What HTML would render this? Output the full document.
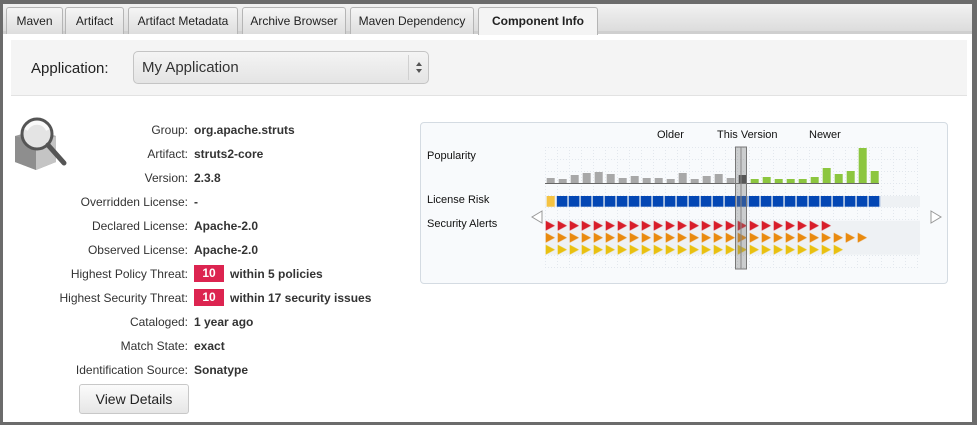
<!DOCTYPE html>
<html><head><meta charset="utf-8"><style>
*{margin:0;padding:0;box-sizing:border-box}
body{width:977px;height:425px;background:#6b6b6b;font-family:"Liberation Sans",sans-serif;position:relative;overflow:hidden}
.frame{position:absolute;left:3px;top:4px;width:969px;height:418px;background:#fff}
.tabbar{position:absolute;left:0;top:0;width:969px;height:30px;background:linear-gradient(#f2f2f2,#dcdcdc);border-bottom:3px solid #cfcfcf}
.tab{position:absolute;top:3px;height:27px;border:1px solid #b5b5b5;border-bottom:none;border-radius:3px 3px 0 0;background:linear-gradient(#f5f5f5,#dedede);font-size:12px;color:#222;text-align:center;line-height:26px}
.tab.on{background:#f4f4f4;font-weight:bold;height:28px}
.panel{position:absolute;left:8px;top:36px;width:956px;height:56px;background:#f4f4f4;border-bottom:1px solid #e2e2e2}
.sel{position:absolute;left:122px;top:11px;width:296px;height:33px;border:1px solid #c4c4c4;border-radius:5px;background:linear-gradient(#f4f4f4,#e4e4e4);font-size:15px;color:#333;padding:7px 8px}
.lbl{position:absolute;font-size:12px;color:#333}
.row{position:absolute;left:0;width:400px;height:20px;font-size:12px}
.row .k{position:absolute;right:215px;color:#333;text-align:right;white-space:nowrap}
.row .v{position:absolute;left:191px;font-weight:bold;color:#333;white-space:nowrap}
.badge{display:inline-block;background:#dc2450;color:#fff;width:30px;height:17px;text-align:center;line-height:17px;margin-right:6px;vertical-align:middle;margin-top:-3px}
.btn{position:absolute;left:76px;top:380px;width:110px;height:30px;border:1px solid #c8c8c8;border-radius:3px;background:linear-gradient(#fbfbfb,#e6e6e6);font-size:14px;color:#222;text-align:center;line-height:28px}
.chart{position:absolute;left:417px;top:118px;width:528px;height:162px;border:1px solid #d4dbe2;border-radius:4px;background:#f8fafc}
</style></head><body>
<div class="frame">
<div class="tabbar">
<div class="tab" style="left:3px;width:57px">Maven</div>
<div class="tab" style="left:62px;width:59px">Artifact</div>
<div class="tab" style="left:125px;width:110px">Artifact Metadata</div>
<div class="tab" style="left:239px;width:104px">Archive Browser</div>
<div class="tab" style="left:347px;width:124px">Maven Dependency</div>
<div class="tab on" style="left:475px;width:120px">Component Info</div>
</div>
<div class="panel">
<div class="lbl" style="left:20px;top:20px;font-size:15px;color:#222">Application:</div>
<div class="sel">My Application
<div style="position:absolute;right:0;top:3px;width:20px;height:25px;border-left:1px solid #d0d0d0"></div>
<svg style="position:absolute;right:5px;top:9px" width="8" height="14"><path d="M1 5L4 1L7 5Z M1 8L4 12L7 8Z" fill="#555"/></svg>
</div>
</div>

<svg style="position:absolute;left:9px;top:112px" width="60" height="60">
<path d="M3 20L24 14L44 20L44 46L24 54L3 46Z" fill="#9a9a9a"/>
<path d="M24 26L44 20L44 46L24 54Z" fill="#c4c4c4"/>
<path d="M3 20L24 26L24 54L3 46Z" fill="#8e8e8e"/>
<circle cx="25" cy="18" r="15" fill="#e4e4e4" stroke="#555" stroke-width="3"/>
<path d="M14 14A12 12 0 0 1 36 14" stroke="#fff" stroke-width="4" fill="none" opacity=".8"/>
<path d="M36 29L52 47" stroke="#555" stroke-width="5" stroke-linecap="round"/>
</svg>

<div style="position:absolute;left:0;top:119px">
<div class="row" style="top:0"><span class="k">Group:</span><span class="v">org.apache.struts</span></div>
<div class="row" style="top:24px"><span class="k">Artifact:</span><span class="v">struts2-core</span></div>
<div class="row" style="top:48px"><span class="k">Version:</span><span class="v">2.3.8</span></div>
<div class="row" style="top:72px"><span class="k">Overridden License:</span><span class="v">-</span></div>
<div class="row" style="top:96px"><span class="k">Declared License:</span><span class="v">Apache-2.0</span></div>
<div class="row" style="top:120px"><span class="k">Observed License:</span><span class="v">Apache-2.0</span></div>
<div class="row" style="top:144px"><span class="k">Highest Policy Threat:</span><span class="v"><span class="badge">10</span>within 5 policies</span></div>
<div class="row" style="top:168px"><span class="k">Highest Security Threat:</span><span class="v"><span class="badge">10</span>within 17 security issues</span></div>
<div class="row" style="top:192px"><span class="k">Cataloged:</span><span class="v">1 year ago</span></div>
<div class="row" style="top:216px"><span class="k">Match State:</span><span class="v">exact</span></div>
<div class="row" style="top:240px"><span class="k">Identification Source:</span><span class="v">Sonatype</span></div>
</div>
<div class="btn">View Details</div>

<div class="chart">
<svg width="528" height="162" style="position:absolute;left:-1px;top:-1px;font-family:'Liberation Sans',sans-serif;font-size:11px">
<defs>
<pattern id="g" x="125" y="25" width="12" height="12" patternUnits="userSpaceOnUse"><path d="M0 0.5H12M0.5 0V12" stroke="#e2e7ed" stroke-width="1" stroke-dasharray="1,2" fill="none"/></pattern>
<pattern id="sq" x="124.7" y="0" width="12" height="200" patternUnits="userSpaceOnUse"><rect x="0" y="74" width="10.7" height="10.7" fill="#0447b4"/></pattern>
<pattern id="tr" x="124.7" y="98.7" width="12" height="10" patternUnits="userSpaceOnUse"><path d="M1 0L10.3 5L1 10Z" fill="#d81e2a"/></pattern>
<pattern id="to" x="124.7" y="110.7" width="12" height="10" patternUnits="userSpaceOnUse"><path d="M1 0L10.3 5L1 10Z" fill="#e98a0f"/></pattern>
<pattern id="ty" x="124.7" y="122.7" width="12" height="10" patternUnits="userSpaceOnUse"><path d="M1 0L10.3 5L1 10Z" fill="#e9c010"/></pattern>
</defs>
<rect x="125" y="25" width="375" height="123" fill="url(#g)"/>
<rect x="125" y="74" width="375" height="11" fill="#eef1f4"/>
<rect x="125" y="98.7" width="375" height="34" fill="#eef1f4"/>
<text x="7" y="37" fill="#111">Popularity</text>
<text x="7" y="81" fill="#111">License Risk</text>
<text x="7" y="105" fill="#111">Security Alerts</text>
<text x="237" y="16" fill="#111">Older</text>
<text x="297" y="16" fill="#111">This Version</text>
<text x="389" y="16" fill="#111">Newer</text>
<g fill="#a8a8a8">
<rect x="126.7" y="56" width="8" height="5"/><rect x="138.7" y="57" width="8" height="4"/><rect x="150.7" y="53" width="8" height="8"/><rect x="162.7" y="51" width="8" height="10"/><rect x="174.7" y="50" width="8" height="11"/><rect x="186.7" y="52" width="8" height="9"/><rect x="198.7" y="56" width="8" height="5"/><rect x="210.7" y="54" width="8" height="7"/><rect x="222.7" y="56" width="8" height="5"/><rect x="234.7" y="56" width="8" height="5"/><rect x="246.7" y="57" width="8" height="4"/><rect x="258.7" y="51" width="8" height="10"/><rect x="270.7" y="57" width="8" height="4"/><rect x="282.7" y="54" width="8" height="7"/><rect x="294.7" y="52" width="8" height="9"/><rect x="306.7" y="56" width="8" height="5"/>
</g>
<rect x="318.7" y="53" width="8" height="8" fill="#444"/>
<g fill="#8cc63f">
<rect x="330.7" y="57" width="8" height="4"/><rect x="342.7" y="55" width="8" height="6"/><rect x="354.7" y="57" width="8" height="4"/><rect x="366.7" y="57" width="8" height="4"/><rect x="378.7" y="57" width="8" height="4"/><rect x="390.7" y="55" width="8" height="6"/><rect x="402.7" y="46" width="8" height="15"/><rect x="414.7" y="52" width="8" height="9"/><rect x="426.7" y="49" width="8" height="12"/><rect x="438.7" y="26" width="8" height="35"/><rect x="450.7" y="49" width="8" height="12"/>
</g>
<rect x="125" y="61" width="334" height="1" fill="#666"/>
<rect x="126.7" y="74" width="8" height="10.7" fill="#f5c342"/>
<rect x="136.7" y="0" width="324" height="100" fill="url(#sq)"/>
<rect x="124.7" y="98.7" width="288" height="10" fill="url(#tr)"/>
<rect x="124.7" y="110.7" width="324" height="10" fill="url(#to)"/>
<rect x="124.7" y="122.7" width="300" height="10" fill="url(#ty)"/>
<rect x="315.5" y="25" width="11" height="122" fill="rgba(120,120,120,.35)" stroke="#777" stroke-width="1"/>
<path d="M321 25V147" stroke="#888" stroke-width="1"/>
<path d="M122 89L112 95L122 101Z" fill="#fff" stroke="#999"/>
<path d="M511 89L521 95L511 101Z" fill="#fff" stroke="#999"/>
</svg>
</div>
</div>
</body></html>
